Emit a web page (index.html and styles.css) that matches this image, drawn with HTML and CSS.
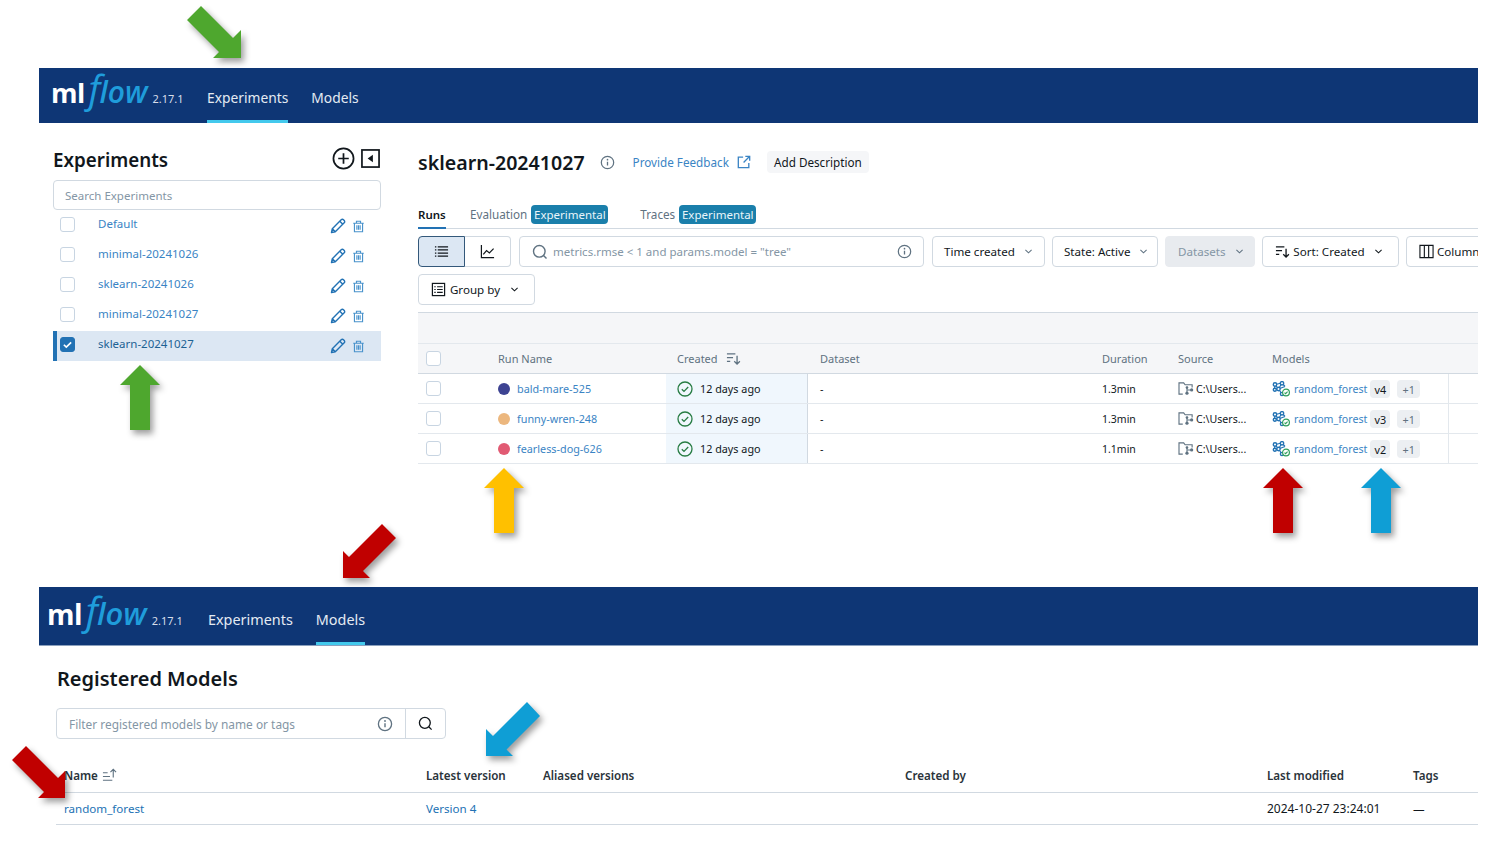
FILE: index.html
```html
<!DOCTYPE html>
<html lang="en">
<head>
  <meta charset="UTF-8" />
  <title>MLflow model registry walkthrough</title>
  <link rel="stylesheet" href="styles.css">
</head>
<body>
  <svg width="0" height="0" class="defs">
    <defs>
      <symbol id="i-pencil" viewBox="0 0 16 16"><path d="M1.5 14.5l.8-3.8L11.2 1.8a1.6 1.6 0 0 1 2.3 0l.7.7a1.6 1.6 0 0 1 0 2.3l-8.9 8.9zM9.8 3.2l3 3M2.3 10.7l3 3" fill="none" stroke="currentColor" stroke-width="1.4" stroke-linejoin="round"/></symbol>
      <symbol id="i-trash" viewBox="0 0 16 16"><path d="M1.5 4h13M5.5 4V1.5h5V4M3 4v10.5h10V4M6 6.5v5.5M8 6.5v5.5M10 6.5v5.5" fill="none" stroke="currentColor" stroke-width="1.4"/></symbol>
      <symbol id="i-info" viewBox="0 0 16 16"><circle cx="8" cy="8" r="6.6" fill="none" stroke="currentColor" stroke-width="1.3"/><path d="M8 7.2v4" stroke="currentColor" stroke-width="1.4"/><circle cx="8" cy="5" r=".9" fill="currentColor"/></symbol>
      <symbol id="i-search" viewBox="0 0 16 16"><circle cx="7.3" cy="7.3" r="5.8" fill="none" stroke="currentColor" stroke-width="1.4"/><path d="M11.5 11.5l3 3" stroke="currentColor" stroke-width="1.4"/></symbol>
      <symbol id="i-chevron" viewBox="0 0 16 16"><path d="M3.5 5.5L8 10l4.5-4.5" fill="none" stroke="currentColor" stroke-width="1.5"/></symbol>
      <symbol id="i-sort" viewBox="0 0 16 16"><path d="M1 3h9M1 7h6.5M1 11h3.5M11.8 5v9M8.8 11l3 3 3-3" fill="none" stroke="currentColor" stroke-width="1.4"/></symbol>
      <symbol id="i-check" viewBox="0 0 16 16"><circle cx="8" cy="8" r="7" fill="none" stroke="currentColor" stroke-width="1.3"/><path d="M4.8 8.2l2.2 2.2 4.2-4.4" fill="none" stroke="currentColor" stroke-width="1.3"/></symbol>
      <symbol id="i-source" viewBox="0 0 18 16"><path d="M5 14H1V2h5l1.5 2H15v3" fill="none" stroke="currentColor" stroke-width="1.2"/><path d="M9.5 6v7M9.5 9.5h4.5" stroke="currentColor" stroke-width="1.1"/><circle cx="9.5" cy="13" r="1.7" fill="currentColor"/><circle cx="9.5" cy="7" r="1.4" fill="currentColor"/><circle cx="14.5" cy="9.5" r="1.7" fill="currentColor"/></symbol>
      <symbol id="i-model" viewBox="0 0 18 16"><path d="M3 3.5L10 2M3 3.5l3.5 4.5M10 2L6.5 8M10 2l3 3.5M3 3.5L2.5 8.5M2.5 8.5l4-.5M6.5 8l3.5 5M6.5 8L13 5.5" fill="none" stroke="#2272b4" stroke-width="1.2"/><circle cx="3" cy="3.5" r="1.7" fill="#fff" stroke="#2272b4" stroke-width="1.4"/><circle cx="10" cy="2.3" r="1.7" fill="#fff" stroke="#2272b4" stroke-width="1.4"/><circle cx="6.5" cy="8" r="1.7" fill="#fff" stroke="#2272b4" stroke-width="1.4"/><circle cx="2.8" cy="8.8" r="1.5" fill="#fff" stroke="#2272b4" stroke-width="1.4"/><circle cx="10" cy="13" r="1.6" fill="#fff" stroke="#2272b4" stroke-width="1.4"/><circle cx="14" cy="11.5" r="3.4" fill="#fff" stroke="#2e9e5b" stroke-width="1.2"/><path d="M12.5 11.6l1.1 1.1 2-2" fill="none" stroke="#2e9e5b" stroke-width="1.1"/></symbol>
    </defs>
  </svg>

  <section class="shot">
    <nav class="topbar">
      <div class="logo"><span class="logo-ml">ml</span><span class="logo-f">f</span><span class="logo-low">low</span><span class="logo-ver">2.17.1</span></div>
      <a class="nav-item active">Experiments</a>
      <a class="nav-item">Models</a>
    </nav>

    <div class="main">
      <aside class="sidebar">
        <div class="side-head">
          <h2>Experiments</h2>
          <div class="side-tools">
            <svg class="tool-plus" viewBox="0 0 24 24"><circle cx="12" cy="12" r="10.5" fill="none" stroke="#11171c" stroke-width="1.8"/><path d="M12 6.5v11M6.5 12h11" stroke="#11171c" stroke-width="1.8"/></svg>
            <svg class="tool-collapse" viewBox="0 0 20 20"><rect x="1" y="1" width="18" height="18" fill="none" stroke="#11171c" stroke-width="1.8"/><path d="M12.5 6v8L7 10z" fill="#11171c"/></svg>
          </div>
        </div>
        <div class="side-search">Search Experiments</div>
        <ul class="exp-list">
          <li class="exp-row"><span class="box"></span><a>Default</a><svg class="pen"><use href="#i-pencil"/></svg><svg class="bin"><use href="#i-trash"/></svg></li>
          <li class="exp-row"><span class="box"></span><a>minimal-20241026</a><svg class="pen"><use href="#i-pencil"/></svg><svg class="bin"><use href="#i-trash"/></svg></li>
          <li class="exp-row"><span class="box"></span><a>sklearn-20241026</a><svg class="pen"><use href="#i-pencil"/></svg><svg class="bin"><use href="#i-trash"/></svg></li>
          <li class="exp-row"><span class="box"></span><a>minimal-20241027</a><svg class="pen"><use href="#i-pencil"/></svg><svg class="bin"><use href="#i-trash"/></svg></li>
          <li class="exp-row selected"><span class="box checked"><svg viewBox="0 0 16 16"><path d="M3.5 8.3l3 3 6-6" fill="none" stroke="#fff" stroke-width="2"/></svg></span><a>sklearn-20241027</a><svg class="pen"><use href="#i-pencil"/></svg><svg class="bin"><use href="#i-trash"/></svg></li>
        </ul>
      </aside>

      <div class="content">
        <div class="page-head">
          <h1>sklearn-20241027</h1>
          <svg class="head-info"><use href="#i-info"/></svg>
          <a class="feedback">Provide Feedback</a>
          <svg class="ext" viewBox="0 0 16 16"><path d="M7 2.5H1.5v12h12V9M9.5 1.5h5v5M14.5 1.5L7.5 8.5" fill="none" stroke="currentColor" stroke-width="1.5"/></svg>
          <button class="add-desc">Add Description</button>
        </div>

        <div class="tabs">
          <span class="tab current">Runs</span>
          <span class="tab">Evaluation <em class="exp-badge">Experimental</em></span>
          <span class="tab">Traces <em class="exp-badge">Experimental</em></span>
        </div>

        <div class="toolbar">
          <div class="segmented">
            <span class="seg on"><svg viewBox="0 0 16 16"><path d="M1 3h1.5M1 6.3h1.5M1 9.7h1.5M1 13h1.5M4 3h11M4 6.3h11M4 9.7h11M4 13h11" stroke="#11171c" stroke-width="1.3"/></svg></span>
            <span class="seg"><svg viewBox="0 0 16 16"><path d="M1.5 1v13.5H15" fill="none" stroke="#11171c" stroke-width="1.3"/><path d="M3.5 11l3.5-4 3 2.5 4.5-4.5" fill="none" stroke="#11171c" stroke-width="1.3"/></svg></span>
          </div>
          <div class="run-search"><svg class="mag"><use href="#i-search"/></svg><span class="ph">metrics.rmse &lt; 1 and params.model = "tree"</span><svg class="run-info"><use href="#i-info"/></svg></div>
          <button class="pick w-time">Time created<svg class="chev"><use href="#i-chevron"/></svg></button>
          <button class="pick w-state">State: Active<svg class="chev"><use href="#i-chevron"/></svg></button>
          <button class="pick w-data off">Datasets<svg class="chev"><use href="#i-chevron"/></svg></button>
          <button class="pick w-sort"><svg class="lead"><use href="#i-sort"/></svg>Sort: Created<svg class="chev dark"><use href="#i-chevron"/></svg></button>
          <button class="pick w-cols"><svg class="lead" viewBox="0 0 16 16"><path d="M1 1.5h14v13H1zM5.7 1.5v13M10.3 1.5v13" fill="none" stroke="#11171c" stroke-width="1.2"/></svg>Columns</button>
        </div>
        <button class="pick w-group"><svg class="lead" viewBox="0 0 16 16"><rect x="1.5" y="1.5" width="13" height="13" fill="none" stroke="#11171c" stroke-width="1.3"/><path d="M3.5 5h1.5M3.5 8h1.5M3.5 11h1.5M6.5 5h6M6.5 8h6M6.5 11h6" stroke="#11171c" stroke-width="1.2"/></svg>Group by<svg class="chev dark"><use href="#i-chevron"/></svg></button>

        <div class="run-table">
          <div class="band"></div>
          <div class="run-row run-header">
            <span><i class="box"></i></span>
            <span>Run Name</span>
            <span class="c-created">Created <svg class="sort-mini"><use href="#i-sort"/></svg></span>
            <span class="c-data">Dataset</span>
            <span>Duration</span>
            <span>Source</span>
            <span>Models</span>
          </div>
          <div class="run-row">
            <span><i class="box"></i></span>
            <span class="c-name"><b class="dot navy"></b><a>bald-mare-525</a></span>
            <span class="c-created cell-tint"><svg class="ok"><use href="#i-check"/></svg>12 days ago</span>
            <span class="c-data">-</span>
            <span class="c-time">1.3min</span>
            <span class="c-src"><svg class="src"><use href="#i-source"/></svg>C:\Users...</span>
            <span class="c-model"><svg class="mdl"><use href="#i-model"/></svg><a>random_forest</a><em class="ver">v4</em><em class="more">+1</em></span>
          </div>
          <div class="run-row">
            <span><i class="box"></i></span>
            <span class="c-name"><b class="dot peach"></b><a>funny-wren-248</a></span>
            <span class="c-created cell-tint"><svg class="ok"><use href="#i-check"/></svg>12 days ago</span>
            <span class="c-data">-</span>
            <span class="c-time">1.3min</span>
            <span class="c-src"><svg class="src"><use href="#i-source"/></svg>C:\Users...</span>
            <span class="c-model"><svg class="mdl"><use href="#i-model"/></svg><a>random_forest</a><em class="ver">v3</em><em class="more">+1</em></span>
          </div>
          <div class="run-row">
            <span><i class="box"></i></span>
            <span class="c-name"><b class="dot rose"></b><a>fearless-dog-626</a></span>
            <span class="c-created cell-tint"><svg class="ok"><use href="#i-check"/></svg>12 days ago</span>
            <span class="c-data">-</span>
            <span class="c-time">1.1min</span>
            <span class="c-src"><svg class="src"><use href="#i-source"/></svg>C:\Users...</span>
            <span class="c-model"><svg class="mdl"><use href="#i-model"/></svg><a>random_forest</a><em class="ver">v2</em><em class="more">+1</em></span>
          </div>
        </div>
      </div>
    </div>
  </section>

  <section class="shot shot-models">
    <nav class="topbar topbar-2">
      <div class="logo"><span class="logo-ml">ml</span><span class="logo-f">f</span><span class="logo-low">low</span><span class="logo-ver">2.17.1</span></div>
      <a class="nav-item">Experiments</a>
      <a class="nav-item active">Models</a>
    </nav>
    <div class="models">
      <h2 class="models-title">Registered Models</h2>
      <div class="filter">
        <div class="filter-input"><span class="ph">Filter registered models by name or tags</span><svg class="filter-info"><use href="#i-info"/></svg></div>
        <div class="filter-btn"><svg><use href="#i-search"/></svg></div>
      </div>
      <div class="model-row model-header">
        <span>Name <svg class="sort-up" viewBox="0 0 16 16"><path d="M1 5h5M1 9h7.5M1 13h10M12 10V1.5M9 4.5l3-3 3 3" fill="none" stroke="#5f7281" stroke-width="1.2"/></svg></span>
        <span>Latest version</span>
        <span>Aliased versions</span>
        <span>Created by</span>
        <span>Last modified</span>
        <span>Tags</span>
      </div>
      <div class="model-row">
        <span><a>random_forest</a></span>
        <span><a>Version 4</a></span>
        <span></span>
        <span></span>
        <span class="stamp">2024-10-27 23:24:01</span>
        <span>—</span>
      </div>
    </div>
  </section>

  <svg class="arrows" viewBox="0 0 1493 850">
    <polygon class="a-green" points="201,6 233,38 241,30 241,58 213,58 219,52 187,20"/>
    <polygon class="a-green" points="140,365 160,385 150,385 150,430 130,430 130,385 120,385"/>
    <polygon class="a-yellow" points="504,468 524,488 514,488 514,533 494,533 494,488 484,488"/>
    <polygon class="a-red" points="1283,468 1303,488 1293,488 1293,533 1273,533 1273,488 1263,488"/>
    <polygon class="a-blue" points="1381,468 1401,488 1391,488 1391,533 1371,533 1371,488 1361,488"/>
    <polygon class="a-red" points="382,524 396,538 363,571 370,578 343,578 343,551 349,557"/>
    <polygon class="a-blue" points="527,702 540,716 506.5,749.5 513,756 486,756 486,729 493,736"/>
    <polygon class="a-red" points="26,746 58,778 65,771 65,798 38,798 44,792 12,760"/>
  </svg>
</body>
</html>
```
FILE: styles.css
```css
* { margin: 0; padding: 0; box-sizing: border-box; }
body {
  background: #fff;
  color: #11171c;
  font-family: 'Noto Sans', 'Open Sans', sans-serif;
  font-size: 11.5px;
  height: 850px;
  width: 1493px;
  overflow: hidden;
  position: relative;
  padding: 68px 15px 0 39px;
}
a { color: #2272b4; text-decoration: none; }
em, i, b { font-style: normal; font-weight: normal; }
ul { list-style: none; }
button { font-family: inherit; cursor: pointer; }
svg { display: block; flex: none; }
.defs { position: absolute; }

/* top bar */
.topbar {
  background: #0e3675;
  height: 55px;
  display: flex;
  align-items: stretch;
  padding-left: 12px;
  color: #e4ebf3;
}
.logo { display: flex; align-items: baseline; width: 156px; white-space: nowrap; }
.logo-ml { color: #fff; font: 700 27px/40px 'Open Sans', sans-serif; letter-spacing: -.6px; }
.logo-f { color: #1f9ddb; font: italic 400 38px/40px 'Open Sans', sans-serif; margin: 0 -1px 0 4px; }
.logo-low { color: #1f9ddb; font: italic 600 30px/40px 'Open Sans', sans-serif; }
.logo-ver { color: #d7deea; font-size: 11px; margin-left: 5px; }
.nav-item {
  color: #e4ebf3;
  font-size: 13.8px;
  line-height: 60px;
  height: 55px;
  margin-right: 23px;
  border-bottom: 3px solid transparent;
}
.nav-item.active { border-bottom-color: #43c9ed; }

/* experiments page */
.main { display: flex; height: 342px; margin-bottom: 122px; overflow: hidden; }
.sidebar { width: 342px; padding-left: 14px; margin-right: 37px; flex: none; }
.side-head { display: flex; justify-content: space-between; align-items: center; height: 57px; padding-top: 18px; }
.side-head h2 { font-size: 18.8px; font-weight: 600; margin-bottom: 2px; }
.side-tools { display: flex; align-items: center; gap: 6px; margin: 0 1px 4px 0; }
.tool-plus { width: 23px; height: 23px; }
.tool-collapse { width: 19px; height: 19px; }
.side-search {
  height: 30px;
  border: 1px solid #d1d9e1;
  border-radius: 4px;
  color: #8496a5;
  padding-left: 11px;
  line-height: 29px;
  margin-bottom: 1px;
}
.exp-row { height: 30px; display: flex; align-items: center; padding-left: 7px; padding-bottom: 6px; }
.exp-row a { width: 232px; margin-left: 23px; color: #3a84c4; }
.pen { width: 16px; height: 16px; color: #2272b4; margin-top: 6px; }
.bin { width: 13px; height: 13px; color: #4a93cc; margin: 6px 0 0 6px; }
.exp-row .box { margin-top: 2px; }
.box {
  display: block;
  width: 15px;
  height: 15px;
  border: 1px solid #c8d5e2;
  border-radius: 3px;
  background: #fff;
  flex: none;
}
.box.checked { background: #2272b4; border-color: #2272b4; }
.exp-row.selected { background: #dce7f3; border-left: 4px solid #2272b4; padding-left: 3px; }
.exp-row.selected a { color: #1d6294; }

.content { flex: 1; min-width: 0; overflow: hidden; }
.page-head { display: flex; align-items: center; height: 28px; margin-top: 25px; }
.page-head h1 { font-size: 19.6px; font-weight: 600; white-space: nowrap; }
.head-info { width: 15px; height: 15px; color: #5f7281; margin-left: 15px; }
.feedback { color: #3a84c4; font-size: 11.7px; margin-left: 18px; }
.ext { width: 14px; height: 14px; color: #3a84c4; margin-left: 8px; }
.add-desc {
  background: #f5f6f8;
  border: 0;
  border-radius: 4px;
  height: 22px;
  width: 102px;
  font-size: 11.7px;
  color: #11171c;
  margin-left: 16px;
}

.tabs {
  display: flex;
  gap: 32px;
  margin-top: 28px;
  border-bottom: 1px solid #d1d9e1;
  height: 25px;
}
.tab { color: #5f7281; font-size: 11.7px; height: 25px; line-height: 21px; white-space: nowrap; }
.tab.current { color: #11171c; font-size: 11.5px; font-weight: 600; width: 28px; border-bottom: 2px solid #2272b4; margin-right: -8px; }
.exp-badge {
  display: inline-block;
  background: #1a7fab;
  color: #e9f5fa;
  border-radius: 4px;
  font-size: 11.5px;
  line-height: 19px;
  width: 77px;
  text-align: center;
  margin-left: 1px;
}

.toolbar { display: flex; gap: 7px; margin-top: 7px; height: 31px; white-space: nowrap; }
.segmented { display: flex; width: 93px; flex: none; }
.seg { flex: 1; border: 1px solid #d1d9e1; border-left: 0; border-radius: 0 4px 4px 0; display: flex; align-items: center; justify-content: center; }
.seg svg { width: 15px; height: 15px; }
.seg.on { flex: none; width: 47px; background: #dce7f3; border: 1px solid #33587a; border-radius: 4px 0 0 4px; }
.run-search {
  width: 405px;
  flex: none;
  margin-left: 1px;
  border: 1px solid #d1d9e1;
  border-radius: 4px;
  display: flex;
  align-items: center;
  padding: 0 11px 0 12px;
}
.ph { color: #8496a5; }
.mag { width: 16px; height: 16px; color: #5f7281; }
.run-search .ph { margin-left: 5px; flex: 1; }
.run-info { width: 15px; height: 15px; color: #5f7281; }
.pick {
  background: #fff;
  border: 1px solid #d1d9e1;
  border-radius: 4px;
  height: 31px;
  font-size: 11.6px;
  color: #11171c;
  display: flex;
  align-items: center;
  justify-content: space-between;
  flex: none;
  padding: 0 10px 0 12px;
  white-space: nowrap;
}
.pick.off { background: #e8ebef; color: #8496a5; border-color: #e8ebef; }
.chev { width: 11px; height: 11px; color: #5f7281; margin-left: 8px; }
.chev.dark { color: #11171c; }
.lead { width: 15px; height: 15px; color: #11171c; margin-right: 3px; }
.w-time { width: 113px; margin-left: 1px; padding-left: 11px; }
.w-state { width: 106px; padding-left: 11px; }
.w-data { width: 90px; }
.w-sort { width: 137px; padding-right: 14px; }
.w-cols { width: 110px; justify-content: flex-start; }
.w-group { width: 117px; margin-top: 7px; padding-right: 14px; }

.run-table { margin-top: 7px; font-size: 10.8px; }
.band { height: 32px; background: #f5f6f8; border-top: 1px solid #d1d9e1; border-bottom: 1px solid #e3e8ed; }
.run-row {
  display: grid;
  grid-template-columns: 80px 168px 142px 294px 76px 94px 177px 29px;
  height: 30px;
  align-items: center;
  border-bottom: 1px solid #e3e8ed;
}
.run-row > span { display: flex; align-items: center; height: 100%; white-space: nowrap; }
.run-row > span:first-child { padding-left: 8px; }
.run-header { background: #f5f6f8; color: #5f7281; height: 30px; border-bottom: 1px solid #d1d9e1; font-size: 11px; }
.c-created { padding-left: 11px; }
.c-data { padding-left: 12px; }
.c-time { font-size: 10.5px; }
.c-src { font-size: 10.6px; }
.cell-tint { background: #f0f7fd; border-right: 1px solid #d1d9e1; }
.sort-mini { width: 15px; height: 15px; margin-left: 8px; color: #5f7281; }
.dot { display: block; width: 12px; height: 12px; border-radius: 50%; margin-right: 7px; }
.dot.navy { background: #3d4392; }
.dot.peach { background: #ecb77e; }
.dot.rose { background: #e15a73; }
.c-name a { color: #3a84c4; }
.ok { width: 16px; height: 16px; color: #277c43; margin-right: 7px; }
.src { width: 17px; height: 15px; color: #5f7281; margin-right: 1px; }
.c-model { border-right: 1px solid #e3e8ed; }
.c-model a { color: #3a84c4; font-size: 10.6px; margin-left: 4px; }
.mdl { width: 18px; height: 16px; }
.ver, .more {
  display: block;
  background: #eceff2;
  border-radius: 4px;
  height: 18px;
  line-height: 19px;
  text-align: center;
  margin-left: 3px;
}
.ver { width: 20px; }
.more { width: 23px; margin-left: 7px; color: #5f7281; }

/* registered models */
.topbar-2 { height: 59px; padding-left: 8px; border-bottom: 1px solid #8ba0bd; }
.topbar-2 .logo { width: 161px; padding-top: 3px; }
.topbar-2 .logo-ml { font-size: 28px; }
.topbar-2 .logo-f { font-size: 39px; }
.topbar-2 .logo-low { font-size: 31px; }
.topbar-2 .nav-item { font-size: 14.4px; line-height: 66px; height: 58px; margin-right: 23px; }
.models { padding: 0 0 0 17px; }
.models-title { font-size: 20px; font-weight: 600; margin: 19px 0 0 1px; line-height: 28px; }
.filter { display: flex; width: 390px; height: 31px; margin-top: 15px; border: 1px solid #d1d9e1; border-radius: 4px; }
.filter-input { flex: 1; display: flex; align-items: center; justify-content: space-between; padding: 0 12px; border-right: 1px solid #d1d9e1; font-size: 11.9px; }
.filter-info { width: 16px; height: 16px; color: #5f7281; }
.filter-btn { width: 39px; display: flex; align-items: center; justify-content: center; color: #11171c; }
.filter-btn svg { width: 15px; height: 15px; }
.model-row {
  display: grid;
  grid-template-columns: 362px 117px 362px 362px 146px 65px;
  height: 32px;
  align-items: center;
  border-bottom: 1px solid #d1d9e1;
  font-size: 11.6px;
  padding-left: 8px;
}
.model-row > span { display: flex; align-items: center; white-space: nowrap; }
.model-row .stamp { font-size: 12px; }
.model-header { font-weight: 600; margin-top: 20px; color: #2a333a; height: 34px; }
.sort-up { width: 15px; height: 15px; margin-left: 4px; }

/* callout arrows laid over the screenshots */
.arrows { position: absolute; left: 0; top: 0; width: 1493px; height: 850px; pointer-events: none; }
.arrows polygon { filter: drop-shadow(3px 4px 3px rgba(0, 0, 0, .38)); }
.a-green { fill: #4ea72e; }
.a-yellow { fill: #ffc000; }
.a-red { fill: #c00000; }
.a-blue { fill: #0f9ed5; }
```
